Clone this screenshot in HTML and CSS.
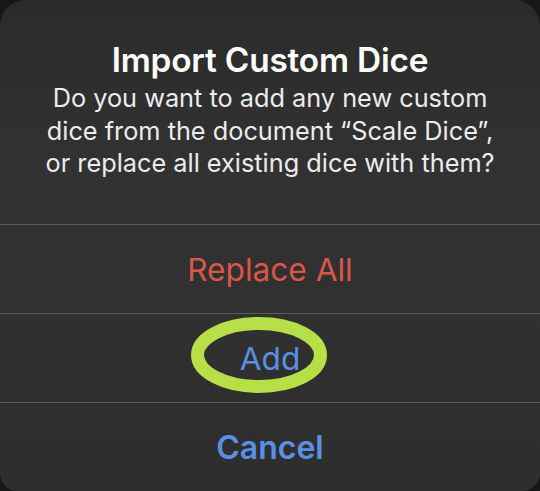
FILE: index.html
```html
<!doctype html>
<html>
	<head>
		<meta charset="utf-8" />
		<title>Import Custom Dice</title>
		<link rel="stylesheet" href="styles.css">
	</head>
	<body>
		<div class="alert">
			<div class="alert-head">
				<h1 class="alert-title">Import Custom Dice</h1>
				<p class="alert-msg">Do you want to add any new custom<br/>dice from the document “Scale Dice”,<br/>or replace all existing dice with them?</p>
			</div>
			<div class="alert-btn destructive">Replace All</div>
			<div class="alert-btn marked">
				Add
				<svg class="ring" width="150" height="90" viewBox="0 0 150 90">
					<ellipse cx="75" cy="45" rx="61.5" ry="31.5" fill="none" stroke="#b6df48" stroke-width="13" />
				</svg>
			</div>
			<div class="alert-btn cancel">Cancel</div>
		</div>
	</body>
</html>
```
FILE: styles.css
```css
*{
	margin:0px;
	padding:0px;
	box-sizing:border-box;
}
html,body{
	width:100%;
	height:100%;
	background-color:#171717;
	overflow:hidden;
	font-family:Inter,"Noto Sans",sans-serif;
}
.alert{
	width:540px;
	height:491px;
	border-radius:26px 26px 18px 18px;
	background:linear-gradient(180deg,#2b2b2b 0%,#323232 35%,#2e2e2e 100%);
	display:flex;
	flex-direction:column;
	overflow:hidden;
}
.alert-head{
	height:225px;
	flex-shrink:0;
	padding:39px 10px 0;
	text-align:center;
	border-bottom:1px solid #5c5c5c;
}
.alert-title{
	font-size:33.4px;
	font-weight:600;
	color:#ffffff;
	line-height:42px;
	letter-spacing:-0.2px;
}
.alert-msg{
	margin-top:1px;
	font-size:25.3px;
	line-height:32.5px;
	color:#ececec;
}
.alert-btn{
	position:relative;
	height:89px;
	flex-shrink:0;
	display:flex;
	align-items:center;
	justify-content:center;
	font-size:31.6px;
	color:#5b8fe5;
	border-bottom:1px solid #5c5c5c;
}
.alert-btn.destructive{
	color:#dc5648;
}
.alert-btn.cancel{
	flex:1;
	height:auto;
	font-size:32px;
	font-weight:600;
	border-bottom:none;
}
.ring{
	position:absolute;
	left:184px;
	top:-4px;
}
```
